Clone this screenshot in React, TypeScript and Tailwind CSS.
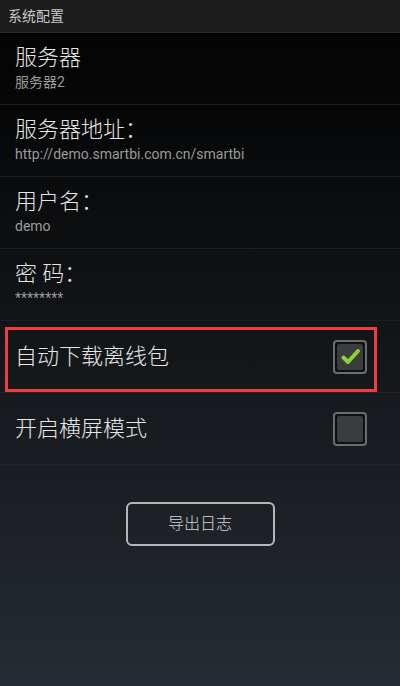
import { ReactNode } from 'react'

const FONT = 'font-["Roboto","Noto_Sans_CJK_SC",sans-serif]'

function Checkbox({ checked }: { checked?: boolean }) {
  return (
    <div className="relative w-[34px] h-[34px] rounded-[4px] border-2 border-[#6b6d6f] bg-[#0e1011] p-[2px]">
      <div className="w-full h-full rounded-[2px] bg-[#3a3c3e]" />
      {checked && (
        <svg className="absolute left-0 top-0" width="30" height="30" viewBox="0 0 30 30">
          <path
            d="M8.5 15.5 L13 20 L23 9"
            fill="none"
            stroke="#8ad333"
            strokeWidth="4"
            strokeLinecap="round"
            strokeLinejoin="round"
          />
        </svg>
      )}
    </div>
  )
}

function TextRow({ title, value }: { title: string; value: string }) {
  return (
    <div className="h-[72px] pl-[15px] pt-[12px] border-b border-[#1c1f21]">
      <p className="text-[22px] leading-[26px] font-light text-[#e6e6e6]">{title}</p>
      <p className="text-[14px] leading-[18px] mt-[2px] text-[#9a9a9a]">{value}</p>
    </div>
  )
}

function CheckRow({ label, checked, children }: { label: string; checked?: boolean; children?: ReactNode }) {
  return (
    <div className="relative h-[72px] pl-[15px] pr-[33px] flex items-center justify-between border-b border-[#1f2325]">
      <p className="text-[22px] leading-[26px] font-light text-[#e6e6e6]">{label}</p>
      <Checkbox checked={checked} />
      {children}
    </div>
  )
}

export default function App() {
  return (
    <div className={`${FONT} w-[400px] h-[686px] flex flex-col bg-[#1c1c1c] overflow-hidden`}>
      <div className="h-[33px] shrink-0 flex items-center pl-[8px] border-b border-[#2b2b2b]">
        <span className="text-[14px] text-[#c9c9c9]">系统配置</span>
      </div>

      <div className="flex-1 bg-gradient-to-b from-[#040404] via-[#14171a] to-[#262c33]">
        <TextRow title="服务器" value="服务器2" />
        <TextRow title="服务器地址：" value="http://demo.smartbi.com.cn/smartbi" />
        <TextRow title="用户名：" value="demo" />
        <TextRow title="密 码：" value="********" />

        <CheckRow label="自动下载离线包" checked>
          <div className="absolute left-[5px] top-[6px] w-[372px] h-[65px] border-[3px] border-[#f03c3c]" />
        </CheckRow>
        <CheckRow label="开启横屏模式" />

        <div className="flex justify-center pt-[37px]">
          <button className="w-[149px] h-[44px] rounded-[6px] border-2 border-[#b4b6b8] text-[16px] font-light text-[#d4d4d4]">
            导出日志
          </button>
        </div>
      </div>
    </div>
  )
}
